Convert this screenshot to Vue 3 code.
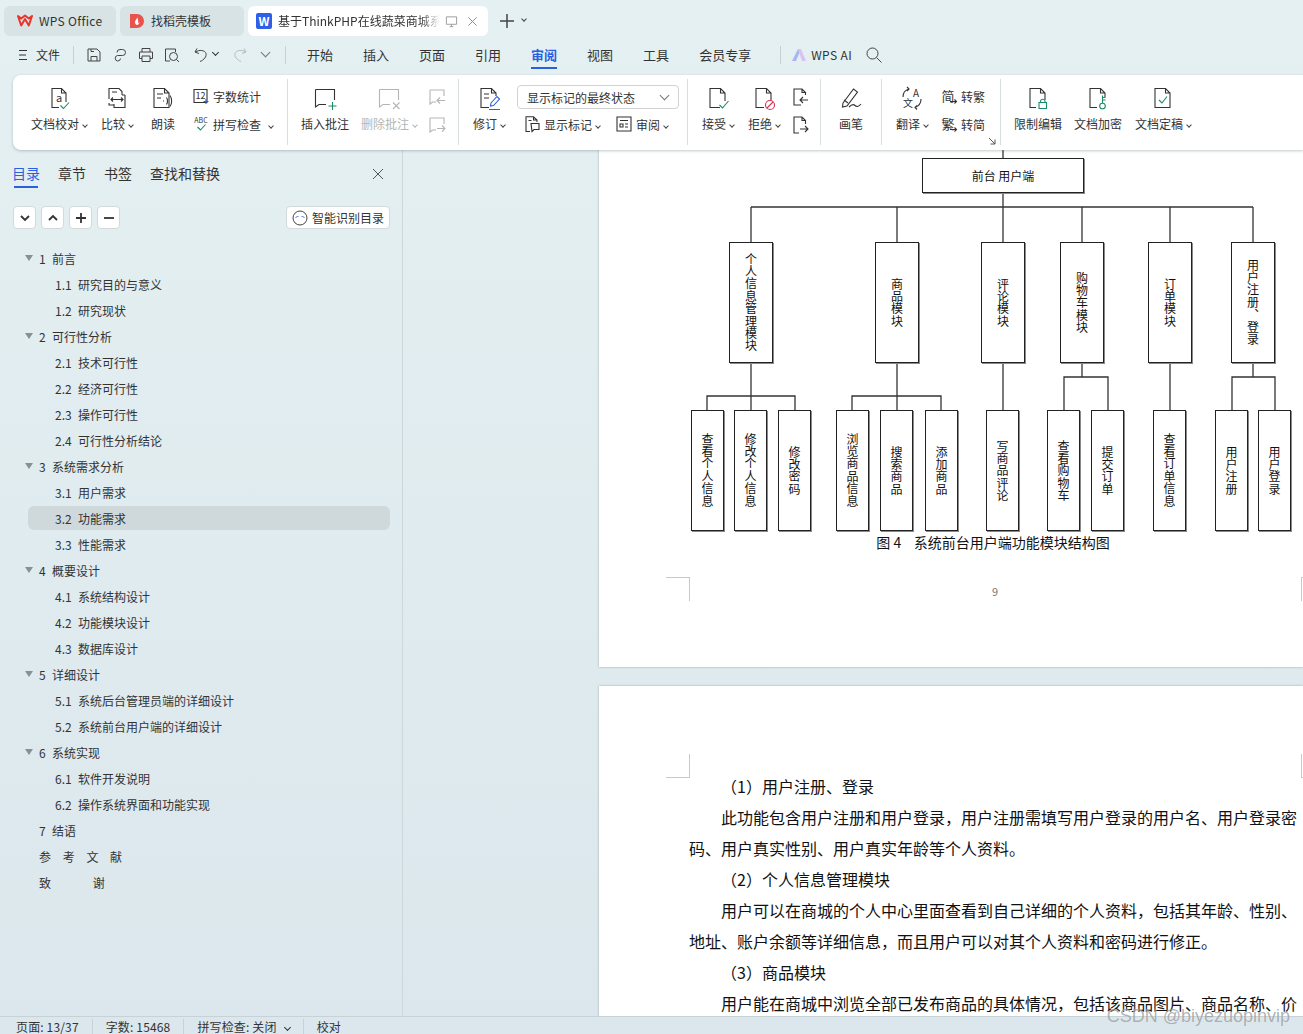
<template>
  <div class="app">
    <header class="tabbar">
      <div class="wtab w112">
        <svg class="tab-ic" viewBox="0 0 16 16"><path d="M1 3l3.200 9.500L8 6l3.800 6.500L15 3l-3.200 2.500L8 2.500 4.200 5.500z" fill="none" stroke="#e8352c" stroke-width="2" stroke-linejoin="round" /></svg>
        <span class="tab-name wps">WPS Office</span>
      </div>
      <div class="wtab w124">
        <svg class="tab-ic" viewBox="0 0 16 16"><path d="M1 1h7a7 7 0 0 1 0 14H1z" fill="#e9534d" /><path d="M8 4c.5 2-2 3-2 5.500 0 1.500 1 2.500 2 2.500s2.500-1 2.500-3L9 10.500C9.500 8 9 6 8 4z" fill="#fff" /></svg>
        <span class="tab-name">找稻壳模板</span>
      </div>
      <div class="wtab active w240">
        <svg class="tab-ic" viewBox="0 0 16 16"><rect width="16" height="16" rx="2" fill="#2f5fe6" /><text x="8" y="12.500" text-anchor="middle" font-size="12" font-weight="700" fill="#fff">W</text></svg>
        <span class="tab-name doc-name">基于ThinkPHP在线蔬菜商城系统的设计</span>
        <svg class="monitor" viewBox="0 0 14 14"><path d="M1.500 2h11v8h-11z M5 12.500h4 M7 10v2.500" fill="none" stroke="#999" /></svg>
        <svg class="tab-close" viewBox="0 0 12 12"><path d="M1.500 1.500l9 9 M10.500 1.500l-9 9" stroke="#888" fill="none" /></svg>
      </div>
      <svg class="plus" viewBox="0 0 14 14"><path d="M7 0v14 M0 7h14" stroke="#444" stroke-width="1.500" /></svg>
      <span class="caret tab-caret"></span>
    </header>

    <nav class="menubar">
      <svg class="hamb" viewBox="0 0 10 12"><path d="M1 1.500h8 M1 6h7 M1 10.500h8" stroke="#333" fill="none" /></svg>
      <span class="file">文件</span>
      <i class="vsep first"></i>
      <div class="quick">
        <svg viewBox="0 0 16 16"><path d="M2 2h9l3 3v9H2z M5 14V9.500h6V14 M5 2v2.500h3" fill="none" stroke="#444" /></svg>
        <svg viewBox="0 0 16 16"><path d="M7 8.500h3.500a3 3 0 0 0 0-6H8a3 3 0 0 0-3 3 M9 8.500H5.500a2.800 2.800 0 0 0 0 5.500H6a2.800 2.800 0 0 0 2.500-2.500" fill="none" stroke="#444" /></svg>
        <svg viewBox="0 0 16 16"><path d="M4 5V1.500h8V5 M4 11.500H1.500V5h13v6.500H12 M4 9h8v5.500H4z" fill="none" stroke="#444" /></svg>
        <svg viewBox="0 0 16 16"><path d="M6 14H1.500V2h10v3" fill="none" stroke="#444" /><circle cx="9.500" cy="9.500" r="4" fill="none" stroke="#444" /><path d="M12.500 12.500l2.500 2.500" stroke="#444" /></svg>
        <svg class="undo" viewBox="0 0 16 16"><path d="M4 1.500L2 5l4 1.500 M2.500 5C6 2.500 12 3 13 6.500c.8 3-2 6.500-6 8" fill="none" stroke="#444" /></svg>
        <span class="caret dark"></span>
        <svg class="redo" viewBox="0 0 16 16"><path d="M12 1.500L14 5l-4 1.500 M13.500 5C10 2.500 4 3 3 6.500c-.8 3 2 6.500 6 8" fill="none" stroke="#bbb" /></svg>
        <span class="caret big"></span>
      </div>
      <i class="vsep second"></i>
      <div class="menu-tabs">
        <span v-for="tab in menuTabs" :key="tab" :class="{ on: tab === '审阅' }">{{ tab }}</span>
      </div>
      <i class="vsep third"></i>
      <svg class="ai-logo" viewBox="0 0 16 16"><path d="M1 14L7 2h3L5 14z" fill="#a7b6f5" /><path d="M7 2h3l5 12h-4z" fill="#d9c2ef" /></svg>
      <span class="ai-name">WPS AI</span>
      <svg class="search" viewBox="0 0 16 16"><circle cx="6.500" cy="6.500" r="5.500" fill="none" stroke="#444" /><path d="M10.500 10.500L15.500 15.500" stroke="#444" /></svg>
    </nav>

    <section class="ribbon">
      <div class="group g1">
        <div class="tool w70">
          <svg class="ic" viewBox="0 0 24 24"><path d="M12 21.500H5V2.500h9.500L19 7v9 M14.500 2.500V7H19" /><text x="12" y="16" text-anchor="middle" font-size="11" class="glyph">a</text><path class="green" d="M13.500 19.500l3 3 5.500-6" /></svg>
          <span class="lbl">文档校对<i class="caret"></i></span>
        </div>
        <div class="tool w46">
          <svg class="ic" viewBox="0 0 24 24"><path d="M4 13V2.500h10L17 5.500V9 M4 17v2h5 M20 9v12.500H9V18 M20 9h-3" /><path d="M6 13.500h12 M8 11.500l-2 2 2 2 M16 11.500l2 2-2 2 M7 6h5" /></svg>
          <span class="lbl">比较<i class="caret"></i></span>
        </div>
        <div class="tool w46">
          <svg class="ic" viewBox="0 0 24 24"><path d="M3 2.500h10.500L18 7v14.500H3z M13.500 2.500V7H18" /><path d="M6 8h6 M6 12h4 M12 15h1 M15.500 11.500c1.200 2 1.200 5 0 7 M19 9.500c2.200 3 2.200 8 0 11" /></svg>
          <span class="lbl">朗读</span>
        </div>
        <div class="stack first-stack">
          <div class="mini">
            <svg class="ic sm" viewBox="0 0 16 16"><path d="M1 1.500h13v13H1z" /><text x="7.500" y="11" text-anchor="middle" font-size="9" class="glyph">12</text><path class="blue" d="M10.500 13.500h5 M13 11v5" /></svg>
            <span>字数统计</span>
          </div>
          <div class="mini">
            <svg class="ic sm" viewBox="0 0 16 16"><text x="8" y="7" text-anchor="middle" font-size="7" class="glyph">ABC</text><path class="green" d="M4.500 11l3 3 5-5.500" /></svg>
            <span>拼写检查<i class="caret spaced"></i></span>
          </div>
        </div>
      </div>

      <div class="group g2">
        <div class="tool w60">
          <svg class="ic" viewBox="0 0 24 24"><path d="M2.500 3.500h19V14 M2.500 3.500V21l3.500-2.500h7" /><path class="green" d="M15.500 20h8 M19.500 16v8" /></svg>
          <span class="lbl">插入批注</span>
        </div>
        <div class="tool w68 off">
          <svg class="ic" viewBox="0 0 24 24"><path d="M2.500 3.500h19V14 M2.500 3.500V21l3.500-2.500h7" /><path d="M16 16.500l6.500 6.500 M22.500 16.500L16 23" /></svg>
          <span class="lbl">删除批注<i class="caret"></i></span>
        </div>
        <div class="icon-stack off">
          <svg class="ic sm18" viewBox="0 0 18 18"><path d="M2 2h14v6 M2 2v14l2.500-2H8" /><path d="M17 12.500H9 M12 9.500l-3 3 3 3" /></svg>
          <svg class="ic sm18" viewBox="0 0 18 18"><path d="M2 2h14v6 M2 2v14l2.500-2H8" /><path d="M9 12.500h8 M14 9.500l3 3-3 3" /></svg>
        </div>
      </div>

      <div class="group g3">
        <div class="tool w44">
          <svg class="ic" viewBox="0 0 24 24"><path d="M12 21.500H4V2.500h10.500L19 7v3 M14.500 2.500V7H19" /><path d="M7 8h5 M7 12h5" /><path class="blue" d="M14 17l6-6.500 2.500 2.500-6 6.500-3 .500z M12 23.500h11" /></svg>
          <span class="lbl">修订<i class="caret"></i></span>
        </div>
        <div class="review-col">
          <div class="select">
            <span>显示标记的最终状态</span>
            <i class="caret big"></i>
          </div>
          <div class="review-row">
            <div class="mini">
              <svg class="ic sm" viewBox="0 0 16 16"><path d="M6 15.500H2V.800h7.500L13 4v2 M9.500.800V4H13" /><path d="M7 7.500h8v6H10l-2 2z M4.500 4.500h3" /></svg>
              <span>显示标记<i class="caret"></i></span>
            </div>
            <div class="mini">
              <svg class="ic sm" viewBox="0 0 16 16"><path d="M1 1h14v14H1z M4 4.500h8 M4 8h3v3H4z M9 8h3 M9 11h3" /></svg>
              <span>审阅<i class="caret"></i></span>
            </div>
          </div>
        </div>
      </div>

      <div class="group g4">
        <div class="tool w46">
          <svg class="ic" viewBox="0 0 24 24"><path d="M14 21.500H4V2.500h10.500L19 7v8 M14.500 2.500V7H19" /><path class="green" d="M13.500 19l3 3 6-7" /></svg>
          <span class="lbl">接受<i class="caret"></i></span>
        </div>
        <div class="tool w46">
          <svg class="ic" viewBox="0 0 24 24"><path d="M12 21.500H4V2.500h10.500L19 7v7 M14.500 2.500V7H19" /><circle class="red" cx="18" cy="19" r="4.500" /><path class="red" d="M15 22l6-6" /></svg>
          <span class="lbl">拒绝<i class="caret"></i></span>
        </div>
        <div class="icon-stack">
          <svg class="ic sm18" viewBox="0 0 18 18"><path d="M10 17H3V1h8l3.500 3.500V7 M11 1v3.500h3.500" /><path d="M17 12H9 M12 9l-3 3 3 3" /></svg>
          <svg class="ic sm18" viewBox="0 0 18 18"><path d="M8 17H3V1h8l3.500 3.500V8 M11 1v3.500h3.500" /><path d="M9 13h8 M14 10l3 3-3 3" /></svg>
        </div>
      </div>

      <div class="group g5">
        <div class="tool w60">
          <svg class="ic" viewBox="0 0 24 24"><path d="M4 17L14.500 3l4 3L8 20l-4.500 1z M5 14l4 3" /><path d="M10 21c3-3 4.500-3 6-1.500s3.500 1.500 6-1.500" /></svg>
          <span class="lbl">画笔</span>
        </div>
      </div>

      <div class="group g6">
        <div class="tool w46">
          <svg class="ic" viewBox="0 0 24 24"><text x="16" y="10.500" text-anchor="middle" font-size="10" class="glyph">A</text><text x="8" y="21" text-anchor="middle" font-size="10" class="glyph">文</text><path d="M3 11c0-4 2-7 6-8 M7 1l2 2-2 2 M21 13c0 4-2 7-6 8.500 M17 19.500l-2 2 2 2" /></svg>
          <span class="lbl">翻译<i class="caret"></i></span>
        </div>
        <div class="stack convert">
          <div class="mini">
            <svg class="ic sm" viewBox="0 0 16 16"><text x="7" y="13" text-anchor="middle" font-size="13" class="glyph">简</text><path d="M9 13.500h6.500 M13.500 11.500l2 2-2 2" /></svg>
            <span>转繁</span>
          </div>
          <div class="mini">
            <svg class="ic sm" viewBox="0 0 16 16"><text x="7" y="13" text-anchor="middle" font-size="13" class="glyph">繁</text><path d="M9 13.500h6.500 M13.500 11.500l2 2-2 2" /></svg>
            <span>转简</span>
          </div>
        </div>
        <svg class="launcher" viewBox="0 0 8 8"><path d="M1 1l6 6 M7 2.500V7H2.500" fill="none" stroke="#555" /></svg>
      </div>

      <div class="group g7">
        <div class="tool w60">
          <svg class="ic" viewBox="0 0 24 24"><path d="M10 21.500H4V2.500h10.500L19 7v7 M14.500 2.500V7H19" /><path class="green" d="M13 16.500h7.500v6H13z M14.500 16.500v-1.500a2.300 2.300 0 0 1 4.500 0v1.500" /></svg>
          <span class="lbl">限制编辑</span>
        </div>
        <div class="tool w60">
          <svg class="ic" viewBox="0 0 24 24"><path d="M11 21.500H4V2.500h10.500L19 7v4 M14.500 2.500V7H19" /><circle class="green" cx="16.500" cy="20" r="2.800" /><path class="green" d="M16.500 17V9.500 M16.500 11.500h3 M16.500 14h3" /></svg>
          <span class="lbl">文档加密</span>
        </div>
        <div class="tool w70">
          <svg class="ic" viewBox="0 0 24 24"><path d="M4 2.500h10.500L19 7v14.500H4z M14.500 2.500V7H19" /><path class="green" d="M8 14l3 3 5-6.500" /></svg>
          <span class="lbl">文档定稿<i class="caret"></i></span>
        </div>
      </div>
    </section>

    <main class="workspace">
      <aside class="sidebar">
        <div class="side-tabs">
          <span class="on">目录</span>
          <span>章节</span>
          <span>书签</span>
          <span>查找和替换</span>
          <svg class="side-close" viewBox="0 0 12 12"><path d="M1 1l10 10 M11 1L1 11" stroke="#555" fill="none" /></svg>
        </div>

        <div class="side-tools">
          <button type="button"><svg viewBox="0 0 12 12"><path d="M2 4l4 4 4-4" /></svg></button>
          <button type="button"><svg viewBox="0 0 12 12"><path d="M2 8l4-4 4 4" /></svg></button>
          <button type="button"><svg viewBox="0 0 12 12"><path d="M6 1v10 M1 6h10" /></svg></button>
          <button type="button"><svg viewBox="0 0 12 12"><path d="M1 6h10" /></svg></button>
          <button class="smart" type="button">
            <svg viewBox="0 0 16 16"><circle cx="8" cy="8" r="7" fill="none" stroke="#444" /><path d="M3.500 8L5.500 6l1 1 M9.500 7l1-1 2 2" fill="none" stroke="#4a78e6" /></svg>
            智能识别目录
          </button>
        </div>

        <ul class="toc">
          <li
            v-for="row in toc"
            :key="row.text"
            class="toc-row"
            :class="[row.sub ? 'sub' : 'top', { active: row.active }]"
          >
            <i v-if="row.open" class="tri"></i>
            <span v-if="row.num" class="num">{{ row.num }}</span>
            <span :class="row.spread">{{ row.text }}</span>
          </li>
        </ul>
      </aside>

      <div class="doc-area">
        <article class="page page-one">
          <div class="chart">
            <!-- viewBox is in screen coordinates, same numbers as the node list -->
            <svg class="wires" width="608" height="383" viewBox="689 150 608 383">
              <path v-for="(w, i) in wires" :key="i" :d="w" />
            </svg>
            <div
              v-for="n in nodes"
              :key="n.text"
              class="node"
              :class="{ root: n.root }"
              :style="{ left: n.x - 689 + 'px', top: n.y - 150 + 'px', width: n.w + 'px', height: n.h + 'px' }"
            >
              <span>{{ n.text }}</span>
            </div>
          </div>
          <p class="caption">图 4&nbsp;&nbsp;&nbsp;&nbsp;系统前台用户端功能模块结构图</p>
          <p class="page-no">9</p>
          <i class="crop bl"></i>
          <i class="crop br"></i>
        </article>

        <article class="page page-two">
          <i class="crop tl"></i>
          <i class="crop tr"></i>
          <p class="head">（1）用户注册、登录</p>
          <p>此功能包含用户注册和用户登录，用户注册需填写用户登录的用户名、用户登录密码、用户真实性别、用户真实年龄等个人资料。</p>
          <p class="head">（2）个人信息管理模块</p>
          <p>用户可以在商城的个人中心里面查看到自己详细的个人资料，包括其年龄、性别、地址、账户余额等详细信息，而且用户可以对其个人资料和密码进行修正。</p>
          <p class="head">（3）商品模块</p>
          <p>用户能在商城中浏览全部已发布商品的具体情况，包括该商品图片、商品名称、价格等信息。</p>
        </article>
      </div>
    </main>

    <footer class="status">
      <span>页面: 13/37</span>
      <span>字数: 15468</span>
      <span>拼写检查: 关闭<i class="caret dark spaced"></i></span>
      <span>校对</span>
    </footer>

    <div class="watermark">CSDN @biyezuopinvip</div>
  </div>
</template>

<script setup>
const menuTabs = ['开始', '插入', '页面', '引用', '审阅', '视图', '工具', '会员专享']

const toc = [
  { num: '1', text: '前言', open: true },
  { num: '1.1', text: '研究目的与意义', sub: true },
  { num: '1.2', text: '研究现状', sub: true },
  { num: '2', text: '可行性分析', open: true },
  { num: '2.1', text: '技术可行性', sub: true },
  { num: '2.2', text: '经济可行性', sub: true },
  { num: '2.3', text: '操作可行性', sub: true },
  { num: '2.4', text: '可行性分析结论', sub: true },
  { num: '3', text: '系统需求分析', open: true },
  { num: '3.1', text: '用户需求', sub: true },
  { num: '3.2', text: '功能需求', sub: true, active: true },
  { num: '3.3', text: '性能需求', sub: true },
  { num: '4', text: '概要设计', open: true },
  { num: '4.1', text: '系统结构设计', sub: true },
  { num: '4.2', text: '功能模块设计', sub: true },
  { num: '4.3', text: '数据库设计', sub: true },
  { num: '5', text: '详细设计', open: true },
  { num: '5.1', text: '系统后台管理员端的详细设计', sub: true },
  { num: '5.2', text: '系统前台用户端的详细设计', sub: true },
  { num: '6', text: '系统实现', open: true },
  { num: '6.1', text: '软件开发说明', sub: true },
  { num: '6.2', text: '操作系统界面和功能实现', sub: true },
  { num: '7', text: '结语' },
  { text: '参 考 文 献', spread: 'spread' },
  { text: '致 谢', spread: 'spread-wide' },
]

function column(x, w, text) {
  return { x, y: 242, w, h: 121, text }
}

function leaf(x, text) {
  return { x, y: 410, w: 33, h: 121, text }
}

const nodes = [
  { x: 922, y: 158, w: 162, h: 35, text: '前台 用户端', root: true },
  column(729, 44, '个人信息管理模块'),
  column(875, 44, '商品模块'),
  column(981, 44, '评论模块'),
  column(1060, 44, '购物车模块'),
  column(1148, 44, '订单模块'),
  column(1231, 44, '用户注册、登录'),
  leaf(691, '查看个人信息'),
  leaf(734, '修改个人信息'),
  leaf(778, '修改密码'),
  leaf(836, '浏览商品信息'),
  leaf(880, '搜索商品'),
  leaf(925, '添加商品'),
  leaf(986, '写商品评论'),
  leaf(1047, '查看购物车'),
  leaf(1091, '提交订单'),
  leaf(1153, '查看订单信息'),
  leaf(1215, '用户注册'),
  leaf(1258, '用户登录'),
]

const wires = [
  'M1003 150V207',
  'M751 207H1253',
  'M751 207V242', 'M897 207V242', 'M1003 207V242', 'M1082 207V242', 'M1170 207V242', 'M1253 207V242',
  'M751 363V410', 'M707 410V396H795V410',
  'M897 363V410', 'M852 410V396H941V410',
  'M1003 363V410',
  'M1082 363V377', 'M1064 410V377H1108V410',
  'M1170 363V410',
  'M1253 363V377', 'M1232 410V377H1275V410',
]
</script>

<style>
html,
body {
  background: #e0ebee;
}
</style>

<style scoped>
* {
  box-sizing: border-box;
}

.app {
  position: relative;
  display: flex;
  flex-direction: column;
  height: 100vh;
  overflow: hidden;
  background: linear-gradient(#e4f0f1, #dbe7ec);
  color: #333;
  font-family: "Noto Sans CJK SC", "Liberation Sans", sans-serif;
  font-size: 12px;
}

/* window tabs */
.tabbar {
  display: flex;
  align-items: center;
  flex: none;
  height: 36px;
  padding: 6px 0 0 4px;
  gap: 4px;
}

.wtab {
  display: flex;
  align-items: center;
  height: 30px;
  border-radius: 6px;
  background: #d8e3e5;
  padding-left: 13px;
}

.wtab.active {
  background: #fff;
  padding-left: 8px;
}

.w112 { width: 112px; }
.w124 { width: 124px; padding-left: 9px; }
.w240 { width: 240px; }

.tab-ic {
  width: 16px;
  height: 16px;
  flex: none;
}

.tab-name {
  margin: -2px 0 0 6px;
  white-space: nowrap;
}

.wps {
  letter-spacing: 0.3px;
}

.doc-name {
  width: 162px;
  overflow: hidden;
  -webkit-mask-image: linear-gradient(90deg, #000 88%, transparent);
  mask-image: linear-gradient(90deg, #000 88%, transparent);
}

.monitor {
  width: 13px;
  height: 13px;
  margin-left: 5px;
}

.tab-close {
  width: 11px;
  height: 11px;
  margin-left: 9px;
}

.plus {
  width: 14px;
  height: 14px;
  margin-left: 8px;
}

.tab-caret {
  margin-left: 9px;
}

.caret {
  display: inline-block;
  width: 4px;
  height: 4px;
  margin-left: 4px;
  border-right: 1.2px solid #444;
  border-bottom: 1.2px solid #444;
  transform: translateY(-2px) rotate(45deg);
}

.caret.dark {
  border-color: #333;
  border-width: 1.5px;
  width: 5px;
  height: 5px;
}

.caret.big {
  width: 7px;
  height: 7px;
  border-color: #777;
  border-width: 1px;
}

.caret.spaced {
  margin-left: 8px;
}

/* menu row */
.menubar {
  position: relative;
  display: flex;
  align-items: center;
  flex: none;
  height: 39px;
  padding: 0 0 2px 18px;
  font-size: 13px;
}

.hamb {
  width: 10px;
  height: 12px;
}

.file {
  margin-left: 8px;
  font-size: 12px;
}

.vsep {
  width: 1px;
  height: 18px;
  background: #c6d1d4;
  flex: none;
}

.vsep.first { margin: 0 12px 0 13px; }
.vsep.second { margin: 0 21px 0 0; }
.vsep.third { margin: 0 10px 0 29px; }

.quick {
  display: flex;
  align-items: center;
  width: 199px;
  gap: 10px;
}

.quick svg {
  width: 16px;
  height: 16px;
  flex: none;
}

.quick .undo {
  margin-left: 3px;
}

.quick .caret {
  margin-left: -6px;
}

.quick .redo {
  margin-left: 4px;
}

.quick .caret.big {
  margin-left: 4px;
}

.menu-tabs {
  display: flex;
  gap: 30px;
}

.menu-tabs span {
  position: relative;
  line-height: 20px;
}

.menu-tabs .on {
  color: #2a5fe0;
  font-weight: 700;
}

.menu-tabs .on::after {
  content: "";
  position: absolute;
  left: 0;
  right: 0;
  top: 22px;
  height: 2px;
  background: #2a5fe0;
}

.ai-logo {
  width: 16px;
  height: 16px;
}

.ai-name {
  margin-left: 4px;
  font-size: 12px;
  letter-spacing: 0.4px;
}

.search {
  width: 16px;
  height: 16px;
  margin-left: 14px;
}

/* ribbon */
.ribbon {
  position: relative;
  z-index: 2;
  display: flex;
  flex: none;
  height: 75px;
  margin-left: 13px;
  padding: 4px 0;
  background: #fff;
  border-radius: 8px 0 0 8px;
  box-shadow: 0 1px 3px rgba(80, 100, 105, 0.35);
}

.group {
  position: relative;
  display: flex;
  flex: none;
  height: 66px;
  border-right: 1px solid #d9dedf;
  padding-left: 7px;
}

.g1 { width: 275px; padding-left: 11px; }
.g2 { width: 171px; }
.g3 { width: 229px; padding-left: 8px; }
.g4 { width: 133px; }
.g5 { width: 61px; padding-left: 0; }
.g6 { width: 119px; }
.g7 { flex: 1; border-right: none; }

.tool {
  display: flex;
  flex-direction: column;
  align-items: center;
  flex: none;
  padding-top: 7px;
}

.w44 { width: 44px; }
.w46 { width: 46px; }
.w60 { width: 60px; }
.w68 { width: 68px; }
.w70 { width: 70px; }

.tool.off,
.icon-stack.off {
  color: #b5b5b5;
}

.tool.off .caret {
  border-color: #b5b5b5;
}

.lbl {
  margin-top: 5px;
  line-height: 18px;
  white-space: nowrap;
}

.ic {
  width: 24px;
  height: 24px;
  flex: none;
  overflow: visible;
  fill: none;
  stroke: currentColor;
  stroke-width: 1.100;
}

.ic.sm {
  width: 16px;
  height: 16px;
}

.ic.sm18 {
  width: 18px;
  height: 18px;
}

.ic .glyph {
  fill: currentColor;
  stroke: none;
}

.ic .green { stroke: #1b8a6b; }
.ic .blue { stroke: #2a5fe0; }
.ic .red { stroke: #d9304f; }

.stack {
  display: flex;
  flex-direction: column;
  gap: 10px;
  padding-top: 8px;
  margin-left: 7px;
}

.mini {
  display: flex;
  align-items: center;
  gap: 4px;
  height: 18px;
  white-space: nowrap;
}

.convert {
  margin-left: 6px;
}

.icon-stack {
  display: flex;
  flex-direction: column;
  align-items: center;
  gap: 10px;
  width: 24px;
  padding-top: 9px;
}

.g2 .icon-stack { margin-left: 2px; }
.g4 .icon-stack { margin-left: 1px; }

.review-col {
  display: flex;
  flex-direction: column;
  width: 162px;
  margin-left: 6px;
  padding-top: 6px;
}

.select {
  display: flex;
  align-items: center;
  justify-content: space-between;
  height: 24px;
  padding: 0 10px 0 9px;
  border: 1px solid #cfd3d5;
  border-radius: 4px;
}

.review-row {
  display: flex;
  gap: 16px;
  margin-top: 6px;
  padding-left: 7px;
}

.launcher {
  position: absolute;
  right: 4px;
  bottom: 0;
  width: 8px;
  height: 8px;
}

/* body */
.workspace {
  display: flex;
  flex: 1;
  min-height: 0;
}

.sidebar {
  flex: none;
  width: 403px;
  padding-top: 13px;
  border-right: 1px solid #cdd6d8;
}

.side-tabs {
  position: relative;
  display: flex;
  gap: 18px;
  padding-left: 12px;
  font-size: 14px;
  line-height: 20px;
}

.side-tabs .on {
  position: relative;
  color: #2a5fe0;
}

.side-tabs .on::after {
  content: "";
  position: absolute;
  left: 2px;
  top: 23px;
  width: 24px;
  height: 2px;
  background: #2a5fe0;
}

.side-close {
  position: absolute;
  left: 372px;
  top: 5px;
  width: 12px;
  height: 12px;
}

.side-tools {
  display: flex;
  gap: 5px;
  margin-top: 23px;
  padding: 0 12px 0 13px;
}

.side-tools button {
  display: flex;
  align-items: center;
  justify-content: center;
  width: 23px;
  height: 23px;
  padding: 0;
  border: 1px solid #d4d9db;
  border-radius: 4px;
  background: #fff;
  color: #333;
  font: inherit;
}

.side-tools svg {
  width: 12px;
  height: 12px;
  fill: none;
  stroke: #333;
  stroke-width: 1.800;
}

.side-tools .smart {
  width: 104px;
  margin-left: auto;
  gap: 4px;
  white-space: nowrap;
}

.side-tools .smart svg {
  width: 16px;
  height: 16px;
  stroke-width: 1;
}

.toc {
  margin: 16px 12px 0 0;
  padding: 0;
  list-style: none;
}

.toc-row {
  display: flex;
  align-items: center;
  height: 26px;
  white-space: nowrap;
}

.toc-row.top {
  padding-left: 39px;
}

.toc-row.top .num {
  width: 13px;
}

.toc-row.sub {
  padding-left: 55px;
}

.toc-row.sub .num {
  width: 23px;
}

.toc-row.active {
  height: 24px;
  margin: 1px 0 1px 28px;
  padding-left: 27px;
  border-radius: 6px;
  background: #cfd9dc;
}

.tri {
  width: 0;
  height: 0;
  margin-left: -14px;
  margin-right: 6px;
  border-left: 4px solid transparent;
  border-right: 4px solid transparent;
  border-top: 6px solid #8a8f91;
}

.spread {
  word-spacing: 9px;
}

.spread-wide {
  word-spacing: 39px;
}

/* document */
.doc-area {
  flex: 1;
  min-width: 0;
  padding-left: 196px;
  overflow: hidden;
}

.page {
  position: relative;
  padding-left: 90px;
  background: #fff;
  box-shadow: 0 0 2px rgba(90, 100, 105, 0.5);
  color: #111;
}

.page p {
  width: 608px;
  margin: 0;
}

.page-one {
  height: 517px;
}

.page-two {
  margin-top: 19px;
  height: 900px;
  padding-top: 85px;
  font-size: 16px;
  line-height: 31px;
}

.page-two p {
  text-indent: 2em;
  text-spacing-trim: space-all;
}

.chart {
  position: relative;
  width: 608px;
  height: 383px;
}

.wires {
  position: absolute;
  left: 0;
  top: 0;
  fill: none;
  stroke: #333;
  stroke-width: 1.300;
}

.node {
  position: absolute;
  display: flex;
  align-items: center;
  justify-content: center;
  border: 1px solid #222;
  box-shadow: 1px 1px 0 #8a8a8a;
  background: #fff;
  font-size: 12px;
}

.node span {
  writing-mode: vertical-rl;
  text-orientation: upright;
  letter-spacing: 0.4px;
}

.node.root span {
  writing-mode: horizontal-tb;
  letter-spacing: 0;
}

.page .caption {
  margin-top: -1px;
  font-size: 14px;
  line-height: 20px;
  text-align: center;
}

.page .page-no {
  margin-top: 31px;
  padding-left: 4px;
  color: #777;
  font-size: 11px;
  line-height: 16px;
  text-align: center;
}

.crop {
  position: absolute;
  width: 24px;
  height: 24px;
  border: 0 solid #c8c8c8;
}

.crop.bl {
  left: 67px;
  top: 427px;
  border-top-width: 1px;
  border-right-width: 1px;
}

.crop.br {
  left: 702px;
  top: 427px;
  border-top-width: 1px;
  border-left-width: 1px;
}

.crop.tl {
  left: 67px;
  top: 68px;
  border-bottom-width: 1px;
  border-right-width: 1px;
}

.crop.tr {
  left: 702px;
  top: 68px;
  border-bottom-width: 1px;
  border-left-width: 1px;
}

/* status bar */
.status {
  position: relative;
  z-index: 2;
  display: flex;
  align-items: center;
  flex: none;
  height: 18px;
  padding: 2px 0 0 16px;
  background: #dbe7ec;
  border-top: 1px solid #c7d2d6;
  line-height: 15px;
  letter-spacing: 0.15px;
  white-space: nowrap;
}

.status span + span {
  margin-left: 13px;
  padding-left: 13px;
  border-left: 1px solid #c7d2d6;
}

.watermark {
  position: absolute;
  z-index: 3;
  right: 13px;
  bottom: 8px;
  color: rgba(110, 115, 120, 0.55);
  font-family: "Liberation Sans", sans-serif;
  font-size: 18px;
  line-height: 20px;
  text-shadow: 0 0 1px rgba(255, 255, 255, 0.6);
}
</style>
